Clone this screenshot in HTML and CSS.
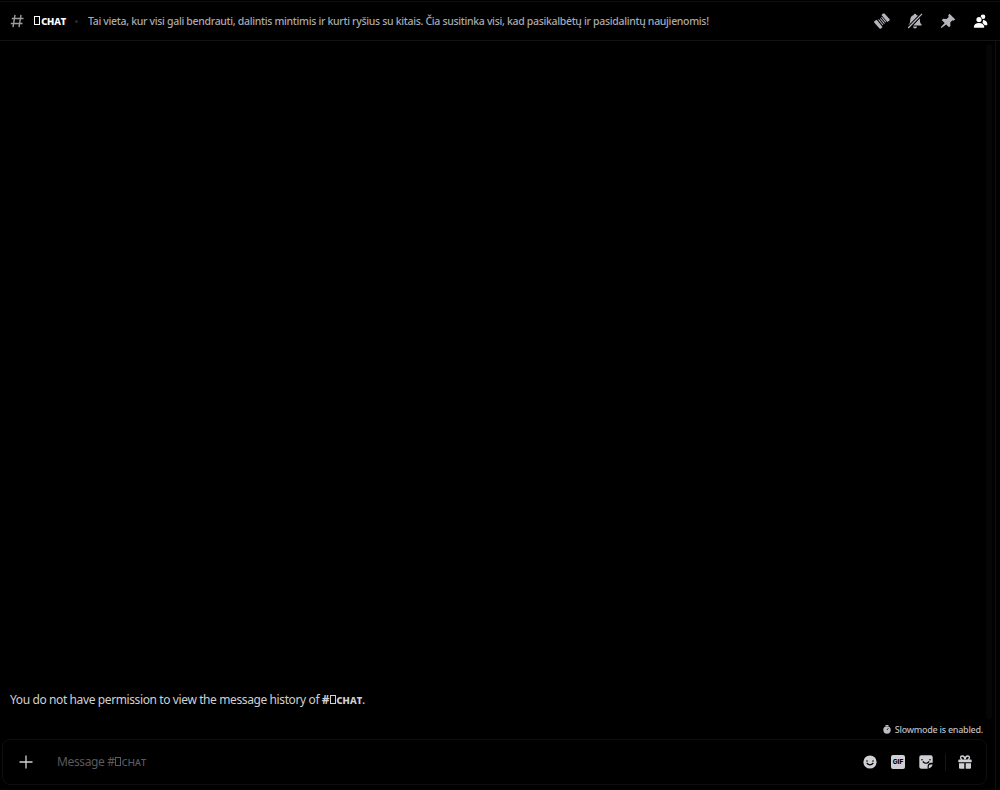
FILE: index.html
```html
<!DOCTYPE html>
<html lang="en">
  <head>
    <meta charset="UTF-8" />
    <meta name="viewport" content="width=device-width, initial-scale=1.0" />
    <title>Chat</title>
    <link rel="stylesheet" href="styles.css">
  </head>
  <body>
    <div class="app">
      <header class="header">
        <svg class="hash" width="14" height="14" viewBox="0 0 14 14">
          <path d="M5 .8L3 13.200M11 .8L9 13.200M1.800 4.500H13.500M.8 9.500H12.500" />
        </svg>
        <h1 class="channel-name"><span class="box"></span>ᴄʜᴀᴛ</h1>
        <span class="dot"></span>
        <div class="topic">Tai vieta, kur visi gali bendrauti, dalintis mintimis ir kurti ryšius su kitais. Čia susitinka visi, kad pasikalbėtų ir pasidalintų naujienomis!</div>
        <div class="toolbar">
          <svg width="16" height="16" viewBox="0 0 16 16">
            <path d="M.2 8.300L2.700 6.800 8.500 13.900 6.900 15.700 5.500 15.500 .2 9.500zM9 .4L10.500 .4 15.700 6.300 15.600 7.500 13.300 9 7.500 2z" />
            <path class="strands" d="M4.500 6.500L9 12M6.200 5.500L10.500 10.600M7.500 4L11.800 9.100" />
          </svg>
          <svg width="16" height="16" viewBox="0 0 16 16">
            <path d="M8 .8a1.300 1.300 0 0 1 1.300 1.200q1.500 .3 2.400 1.400L3 12.500H1.800q-.6-.7 .3-1.500Q3.200 10 3.200 7.500C3.200 4.500 4.500 2.500 6.700 2A1.300 1.300 0 0 1 8 .8zM12.900 5v2.500q0 2.500 1.300 3.500 .9 .8 .3 1.500H6.200zM6 13.500h4a2 2 0 0 1-4 0z" />
            <path class="slash-gap" d="M1.500 14.700L14.700 1.200" />
            <path class="slash" d="M1.200 15L15 .9" />
          </svg>
          <svg width="16" height="16" viewBox="0 0 16 16">
            <path d="M9.500 .8l5.800 5.700-1.500 1.100-1.600-.2-1.900 2.100 .1 3.500-1.400 1.200L6.200 11.500l-4.700 3.600-.8-.8L4.700 9.900 1.900 7.200l1-1.500 3.700 .2 2.100-1.900-.4-1.700z" />
          </svg>
          <svg class="active" width="16" height="16" viewBox="0 0 16 16">
            <circle cx="10" cy="3.800" r="2.300" />
            <path d="M10.200 6.800Q14.400 8 14.400 11.500q0 .8-.8 .8H9z" />
            <circle class="back" cx="6" cy="6.600" r="2.600" />
            <path class="back" d="M.8 14Q1.200 9.900 6 9.900T11.300 14q0 .8-.8 .8H1.600q-.8 0-.8-.8z" />
          </svg>
        </div>
      </header>

      <main class="chat">
        <div class="messages">
          <p class="notice">You do not have permission to view the message history of <strong>#<span class="box"></span>ᴄʜᴀᴛ</strong>.</p>
          <div class="scrollbar"></div>
        </div>

        <div class="slowmode">
          <svg width="8" height="9" viewBox="0 0 8 9">
            <path d="M2.500 0h3v1h-3z" />
            <circle cx="4" cy="5" r="3.700" />
            <path class="hand" d="M4 5l1.300-1.700" />
          </svg>
          <span>Slowmode is enabled.</span>
        </div>

        <div class="composer">
          <svg class="plus" width="14" height="14" viewBox="0 0 14 14">
            <path d="M7 .5v13M.5 7h13" />
          </svg>
          <div class="placeholder">Message #<span class="box"></span>ᴄʜᴀᴛ</div>
          <div class="buttons">
            <svg width="14" height="14" viewBox="0 0 14 14">
              <circle cx="7" cy="7" r="6.600" />
              <circle class="cut" cx="4" cy="6" r=".8" />
              <circle class="cut" cx="10" cy="6" r=".8" />
              <path class="cut-line" d="M3.700 8q3.300 3.800 6.600 0" />
            </svg>
            <span class="gif">GIF</span>
            <svg width="14" height="14" viewBox="0 0 14 14">
              <path d="M2.300 .3h9.400a2 2 0 0 1 2 2v5.500h-1.500a3.500 3.500 0 0 0-3.600 3.600v2.300H2.300a2 2 0 0 1-2-2V2.300a2 2 0 0 1 2-2zM9.700 13.400v-1.700a2.200 2.200 0 0 1 2.200-2.200h1.700q-.6 3-3.900 3.900z" />
              <circle class="cut" cx="3" cy="4.800" r=".8" />
              <circle class="cut" cx="11" cy="4.800" r=".8" />
              <path class="cut-line" d="M3.800 6.500q3.200 3.500 6.400 0" />
            </svg>
            <span class="divider"></span>
            <svg width="14" height="14" viewBox="0 0 14 14">
              <path d="M1.300 4.500h11.400q1 0 1 1V7.200H.3V5.500q0-1 1-1zM1 8.300h5.300v5.400H2q-1 0-1-1zM7.700 8.300H13v4.400q0 1-1 1H7.700z" />
              <path class="bow" d="M7 4.500Q6.600 1 4.300 1a1.700 1.700 0 0 0 0 3.500M7 4.500Q7.400 1 9.700 1a1.700 1.700 0 0 1 0 3.500" />
            </svg>
          </div>
        </div>
      </main>
    </div>
  </body>
</html>
```
FILE: styles.css
```css
body {
  margin: 0;
  background-color: #000;
  color: #d0d0d3;
  font-family: "Noto Sans", sans-serif;
}

.app {
  display: flex;
  flex-direction: column;
  height: 790px;
  overflow: hidden;
  box-sizing: border-box;
  padding-top: 1px;
}

svg {
  display: block;
  flex: none;
  fill: currentColor;
}

/* Header */
.header {
  display: flex;
  align-items: center;
  height: 38px;
  border-top: 1px solid #0f0f10;
  border-bottom: 1px solid #131315;
  padding: 0 11px 0 10px;
}

.hash {
  color: #9a9aa1;
  fill: none;
  stroke: currentColor;
  stroke-width: 1.4;
}

.channel-name {
  width: 33px;
  margin: 0 0 0 10px;
  padding-bottom: 1px;
  color: #fff;
  font-size: 12px;
  font-weight: 700;
  letter-spacing: -0.6px;
  white-space: nowrap;
}

.box {
  display: inline-block;
  box-sizing: border-box;
  width: 6px;
  height: 9px;
  margin-right: 1px;
  border: 1px solid currentColor;
}

.notice .box {
  margin-left: 1px;
  margin-right: 0;
}

.dot {
  width: 3px;
  height: 3px;
  margin: 0 10px 0 8px;
  border-radius: 50%;
  background-color: #29292c;
}

.topic {
  color: #a9a9b0;
  font-size: 10.5px;
  font-weight: 500;
  letter-spacing: -0.315px;
  white-space: nowrap;
}

.toolbar {
  display: flex;
  gap: 17px;
  margin-left: auto;
  color: #b5b5bb;
}

.toolbar .active {
  color: #fff;
}

.strands {
  stroke: currentColor;
  stroke-width: 1.05;
}

.slash {
  stroke: currentColor;
  stroke-width: 1.3;
}

.slash-gap {
  stroke: #000;
  stroke-width: 3.2;
}

.back {
  stroke: #000;
  stroke-width: 1.2;
  paint-order: stroke;
}

/* Messages */
.chat {
  display: flex;
  flex: 1;
  flex-direction: column;
  width: 995px;
  border-right: 1px solid #101012;
}

.messages {
  display: flex;
  flex: 1;
  align-items: flex-end;
  justify-content: space-between;
  padding: 3px 3px 0 10px;
}

.notice {
  margin: 0 0 9px;
  font-size: 12px;
  letter-spacing: -0.39px;
  line-height: 20px;
  white-space: nowrap;
}

.scrollbar {
  align-self: stretch;
  width: 6px;
  border-radius: 3px;
  background-color: #060607;
}

.slowmode {
  display: flex;
  align-items: center;
  justify-content: flex-end;
  gap: 4px;
  height: 20px;
  padding-right: 12px;
  color: #bdbdc3;
  font-size: 9px;
  font-weight: 500;
  letter-spacing: -0.26px;
}

.hand {
  stroke: #000;
  stroke-width: 0.8;
}

/* Message box */
.composer {
  display: flex;
  align-items: center;
  box-sizing: border-box;
  width: 985px;
  height: 46px;
  margin: 0 0 5px 2px;
  padding: 0 14px 0 16px;
  border: 1px solid #0e0e10;
  border-radius: 8px;
}

.plus {
  fill: none;
  stroke: #d2d2d6;
  stroke-width: 1.3;
}

.placeholder {
  margin-left: 24px;
  padding-bottom: 2px;
  color: #59595e;
  font-size: 12px;
  letter-spacing: -0.37px;
}

.buttons {
  display: flex;
  align-items: center;
  gap: 14px;
  margin-left: auto;
  color: #cfcfd4;
}

.gif {
  width: 14px;
  height: 14px;
  border-radius: 2px;
  background-color: #cfcfd4;
  color: #000;
  font-family: Inter, sans-serif;
  font-size: 6.5px;
  font-weight: 800;
  line-height: 14px;
  text-align: center;
}

.divider {
  width: 1px;
  height: 17px;
  margin: 0 -2px;
  background-color: #151517;
}

.cut {
  fill: #000;
}

.cut-line {
  fill: none;
  stroke: #000;
  stroke-width: 1.2;
}

.bow {
  fill: none;
  stroke: currentColor;
  stroke-width: 1.4;
}
```
